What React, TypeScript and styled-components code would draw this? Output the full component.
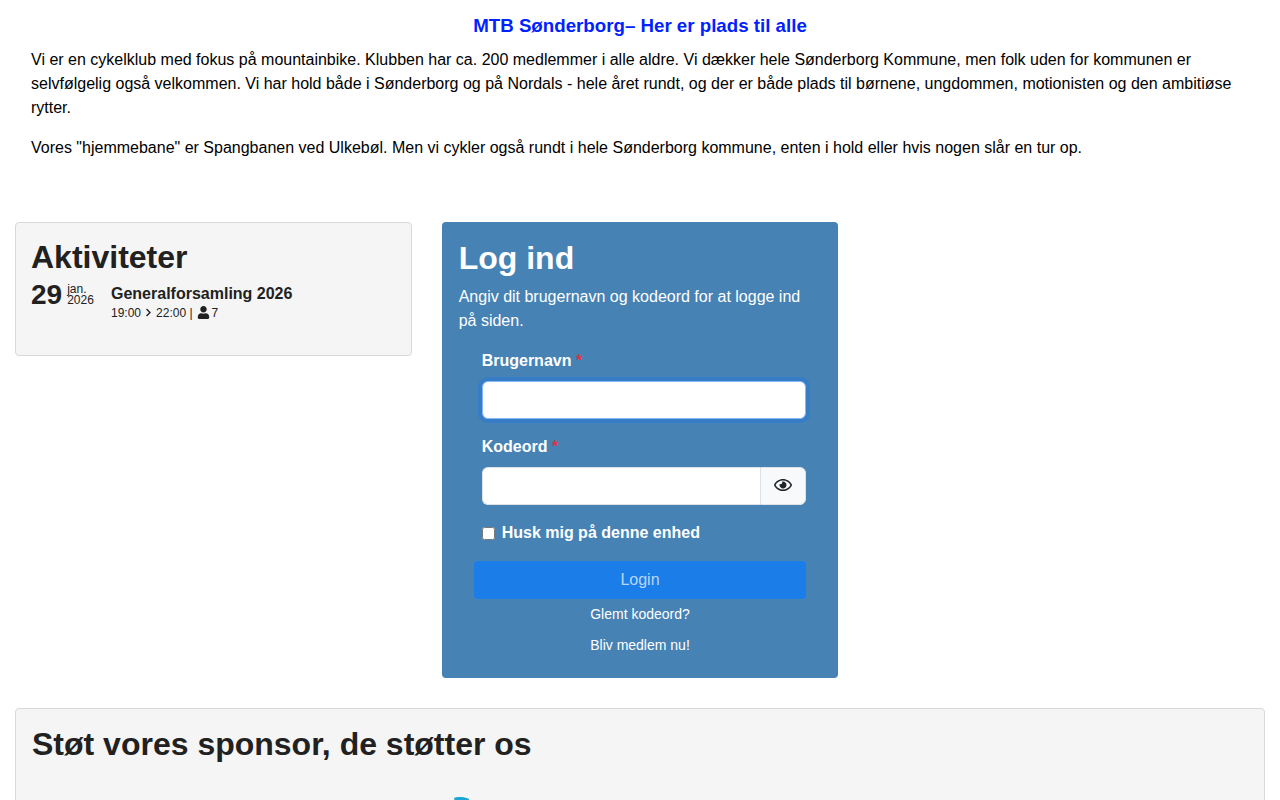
import React from "react";
import styled, { createGlobalStyle } from "styled-components";
import { FaChevronRight, FaRegEye, FaUser } from "react-icons/fa";

const GlobalStyle = createGlobalStyle`
	* {
		box-sizing: border-box;
	}
	body {
		margin: 0;
		background: #fff;
		color: #000;
		font-family: "Liberation Sans", Arial, sans-serif;
		font-size: 16px;
		line-height: 24px;
	}
`;

export default function App() {
	return (
		<Page>
			<GlobalStyle />
			<Intro>
				<Headline>MTB Sønderborg– Her er plads til alle</Headline>
				<Text>
					Vi er en cykelklub med fokus på mountainbike. Klubben har ca. 200 medlemmer i alle aldre. Vi dækker hele
					Sønderborg Kommune, men folk uden for kommunen er selvfølgelig også velkommen. Vi har hold både i Sønderborg og
					på Nordals - hele året rundt, og der er både plads til børnene, ungdommen, motionisten og den ambitiøse rytter.
				</Text>
				<Text>
					Vores "hjemmebane" er Spangbanen ved Ulkebøl. Men vi cykler også rundt i hele Sønderborg kommune, enten i hold
					eller hvis nogen slår en tur op.
				</Text>
			</Intro>
			<Columns>
				<Well>
					<WellTitle>Aktiviteter</WellTitle>
					<Activity>
						<DateBox>
							<Day>29</Day>
							<MonthYear>
								<span>jan.</span>
								<span>2026</span>
							</MonthYear>
						</DateBox>
						<ActivityInfo>
							<ActivityName>Generalforsamling 2026</ActivityName>
							<ActivityMeta>
								19:00 <Chevron size={9} /> 22:00 | <FaUser size={13} />
								<Count>7</Count>
							</ActivityMeta>
						</ActivityInfo>
					</Activity>
				</Well>
				<LoginPanel>
					<LoginTitle>Log ind</LoginTitle>
					<LoginIntro>Angiv dit brugernavn og kodeord for at logge ind på siden.</LoginIntro>
					<LoginForm>
						<Field>
							<FieldLabel>
								Brugernavn <Required>*</Required>
							</FieldLabel>
							<TextInput $focused type="text" />
						</Field>
						<Field>
							<FieldLabel>
								Kodeord <Required>*</Required>
							</FieldLabel>
							<InputGroup>
								<PasswordInput type="password" />
								<EyeButton type="button">
									<FaRegEye size={18} />
								</EyeButton>
							</InputGroup>
						</Field>
						<RememberRow>
							<Check type="checkbox" />
							Husk mig på denne enhed
						</RememberRow>
						<LoginButton type="button">Login</LoginButton>
						<LoginLink>Glemt kodeord?</LoginLink>
						<LoginLink>Bliv medlem nu!</LoginLink>
					</LoginForm>
				</LoginPanel>
			</Columns>
			<SponsorWell>
				<SponsorTitle>Støt vores sponsor, de støtter os</SponsorTitle>
				<SponsorLogo width="120" height="60" viewBox="0 0 120 60">
					<path d="M7 1 C12 -1 18 0 22 2 L22 14 L10 14 Z" fill="#1ba6d6" />
					<path d="M100 3 L104 3 L104 20 L100 20 Z" fill="#1ba6d6" />
				</SponsorLogo>
			</SponsorWell>
		</Page>
	);
}

const Page = styled.div`
	padding: 0 15px;
`;

const Intro = styled.section`
	padding: 14px 16px 0;
`;

const Headline = styled.h1`
	margin: 0 0 10px;
	color: #0022ff;
	font-size: 18.72px;
	font-weight: bold;
	line-height: 24px;
	text-align: center;
`;

const Text = styled.p`
	margin: 0 0 16px;
`;

const Columns = styled.div`
	display: grid;
	grid-template-columns: repeat(3, 1fr);
	gap: 30px;
	align-items: start;
	margin-top: 62px;
`;

const Well = styled.div`
	height: 134px;
	padding: 15px 15px;
	background: #f5f5f5;
	border: 1px solid #d9d9d9;
	border-radius: 4px;
	color: #212121;
`;

const WellTitle = styled.h2`
	margin: 0;
	font-size: 32px;
	font-weight: bold;
	line-height: 38px;
`;

const Activity = styled.div`
	display: flex;
	margin-top: 3px;
`;

const DateBox = styled.div`
	display: flex;
	width: 80px;
`;

const Day = styled.span`
	font-size: 28px;
	font-weight: bold;
	line-height: 32px;
`;

const MonthYear = styled.span`
	display: flex;
	flex-direction: column;
	margin: 5px 0 0 5px;
	font-size: 12px;
	line-height: 11px;
`;

const ActivityInfo = styled.div`
	padding-top: 3px;
`;

const ActivityName = styled.div`
	font-size: 16px;
	font-weight: bold;
	line-height: 24px;
`;

const ActivityMeta = styled.div`
	display: flex;
	align-items: center;
	gap: 4px;
	font-size: 12px;
	line-height: 12px;
`;

const Chevron = styled(FaChevronRight)`
	margin: 0 -1px;
`;

const Count = styled.span`
	margin-left: -2px;
`;

const LoginPanel = styled.div`
	height: 456px;
	padding: 16px 32px 0 17px;
	background: #4682b4;
	border-radius: 4px;
	color: #fff;
`;

const LoginTitle = styled.h2`
	margin: 0;
	font-size: 32px;
	font-weight: bold;
	line-height: 40px;
`;

const LoginIntro = styled.p`
	margin: 7px 0 0;
`;

const LoginForm = styled.form`
	display: flex;
	flex-direction: column;
	margin-top: 16px;
	padding-left: 23px;
`;

const Field = styled.div`
	margin-bottom: 16px;
`;

const FieldLabel = styled.label`
	display: block;
	margin-bottom: 8px;
	font-weight: bold;
`;

const Required = styled.span`
	color: #dc3545;
`;

const TextInput = styled.input<{ $focused?: boolean }>`
	display: block;
	width: 100%;
	height: 38px;
	border: 1px solid ${(p) => (p.$focused ? "#86b7fe" : "#dee2e6")};
	border-radius: 6px;
	background: #fff;
	outline: none;
	box-shadow: ${(p) => (p.$focused ? "0 0 0 4px rgba(13, 110, 253, 0.25)" : "none")};
`;

const InputGroup = styled.div`
	display: flex;
`;

const PasswordInput = styled.input`
	flex: 1;
	min-width: 0;
	height: 38px;
	border: 1px solid #dee2e6;
	border-right: 0;
	border-radius: 6px 0 0 6px;
	background: #fff;
	outline: none;
`;

const EyeButton = styled.button`
	display: flex;
	align-items: center;
	justify-content: center;
	width: 46px;
	height: 38px;
	padding: 0 0 3px;
	background: #f8f9fa;
	border: 1px solid #dee2e6;
	border-radius: 0 6px 6px 0;
	color: #212529;
`;

const RememberRow = styled.label`
	display: flex;
	align-items: center;
	gap: 7px;
	margin-bottom: 16px;
	font-weight: bold;
`;

const Check = styled.input`
	width: 13px;
	height: 13px;
	margin: 0;
`;

const LoginButton = styled.button`
	height: 38px;
	margin-left: -8px;
	background: #1a7de8;
	border: 0;
	border-radius: 4px;
	color: rgba(255, 255, 255, 0.7);
	font-family: inherit;
	font-size: 16px;
`;

const LoginLink = styled.a`
	margin-top: 3px;
	margin-bottom: 4px;
	margin-left: -8px;
	font-size: 14px;
	line-height: 24px;
	text-align: center;
	color: #fff;
`;

const SponsorWell = styled.div`
	margin-top: 30px;
	padding: 16px;
	height: 300px;
	background: #f5f5f5;
	border: 1px solid #d9d9d9;
	border-radius: 4px;
	color: #212121;
`;

const SponsorTitle = styled.h2`
	margin: 0;
	font-size: 32px;
	font-weight: bold;
	line-height: 38px;
`;

const SponsorLogo = styled.svg`
	display: block;
	margin: 34px 0 0 415px;
`;
